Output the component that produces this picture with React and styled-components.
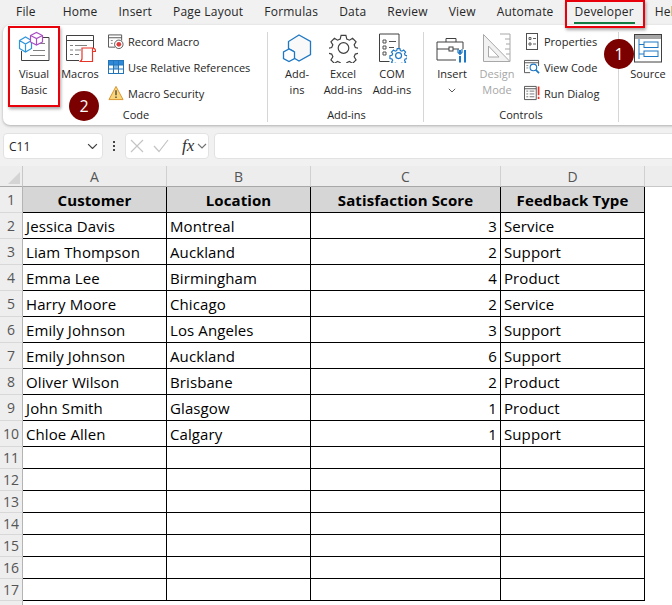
import React from "react";
import styled, { createGlobalStyle } from "styled-components";

const GlobalStyle = createGlobalStyle`
  html, body {
    margin: 0;
    padding: 0;
    background: #ffffff;
  }
`;

const uiFont = `"Open Sans", "Noto Sans", "Liberation Sans", sans-serif`;

const Page = styled.div`
  position: relative;
  width: 672px;
  height: 605px;
  overflow: hidden;
  background: #f1f1f1;
  font-family: ${uiFont};
  color: #262626;
`;

const TabBar = styled.div`
  display: flex;
  align-items: center;
  gap: 21px;
  height: 25px;
  padding-left: 16px;
  font-size: 12px;
  letter-spacing: 0.2px;
  white-space: nowrap;
`;

const Tab = styled.span`
  position: relative;
  padding-bottom: 2px;
  margin-right: ${({ $after }) => $after || 0}px;
  ${({ $active }) => $active && `
    &::after {
      content: "";
      position: absolute;
      left: -1px;
      right: -1px;
      bottom: -2px;
      height: 2px;
      background: #107c41;
    }
  `}
`;

const Ribbon = styled.div`
  display: flex;
  height: 100px;
  margin-left: 3px;
  width: 690px;
  background: #ffffff;
  border-radius: 7px;
  box-shadow: 0 1px 3px rgba(0, 0, 0, 0.28);
`;

const Group = styled.div`
  display: flex;
  flex-direction: column;
  flex: none;
  width: ${({ $width }) => $width}px;
  margin: 7px 0 3px;
  padding-left: ${({ $pad }) => $pad || 0}px;
  box-sizing: border-box;
  border-right: ${({ $last }) => ($last ? "none" : "1px solid #d6d6d6")};
`;

const GroupBody = styled.div`
  display: flex;
  flex: 1;
  min-height: 0;
`;

const GroupLabel = styled.div`
  font-size: 11px;
  line-height: 15px;
  height: 15px;
  text-align: center;
  padding-right: ${({ $shift }) => $shift || 0}px;
`;

const LargeButton = styled.div`
  display: flex;
  flex-direction: column;
  align-items: center;
  flex: none;
  width: ${({ $width }) => $width}px;
  font-size: 11px;
  line-height: 16px;
  text-align: center;
  white-space: nowrap;
  color: ${({ $disabled }) => ($disabled ? "#a6a6a6" : "#262626")};
`;

const IconSlot = styled.div`
  display: flex;
  align-items: flex-end;
  justify-content: center;
  height: 31px;
  margin-bottom: 3px;
`;

const ChevronLine = styled.div`
  display: flex;
  align-items: center;
  height: 16px;
`;

const SmallColumn = styled.div`
  display: flex;
  flex-direction: column;
  gap: 8px;
  margin-left: ${({ $left }) => $left || 0}px;
`;

const SmallButton = styled.div`
  display: flex;
  align-items: center;
  gap: 4px;
  height: 18px;
  font-size: 11px;
  white-space: nowrap;
  & > svg {
    flex: none;
    width: 16px;
  }
`;

const FormulaBar = styled.div`
  display: flex;
  align-items: center;
  height: 26px;
  margin-top: 8px;
  padding-left: 3px;
`;

const Field = styled.div`
  display: flex;
  align-items: center;
  box-sizing: border-box;
  height: 26px;
  flex: none;
  width: ${({ $width }) => $width}px;
  margin-left: ${({ $left }) => $left || 0}px;
  padding-right: ${({ $right }) => $right || 0}px;
  background: #ffffff;
  border: 1px solid #e2e2e2;
  border-radius: 4px;
`;

const NameText = styled.span`
  flex: 1;
  padding-left: 5px;
  font-size: 12px;
`;

const Dots = styled.div`
  display: flex;
  flex-direction: column;
  justify-content: center;
  gap: 2px;
  width: 22px;
  align-items: center;
  flex: none;
  & > i {
    display: block;
    width: 2px;
    height: 2px;
    background: #444;
  }
`;

const FormulaMarks = styled.svg`
  flex: none;
  margin-left: 4px;
`;

const FxText = styled.span`
  font-family: "Liberation Serif", serif;
  font-style: italic;
  font-size: 17px;
  font-weight: 400;
  color: #303030;
  margin-left: 8px;
  margin-right: 3px;
`;

const Sheet = styled.div`
  display: grid;
  grid-template-columns: 23px 144px 144px 190px 144px 27px;
  grid-template-rows: 21px 26px repeat(9, 26px) repeat(7, 22px) 5px;
  margin-top: 7px;
  background: #ffffff;
`;

const CornerCell = styled.div`
  position: relative;
  background: #ededed;
  border-right: 1px solid #c8c8c8;
  border-bottom: 1px solid #a8a8a8;
  box-sizing: border-box;
  &::after {
    content: "";
    position: absolute;
    right: 2px;
    bottom: 2px;
    border-style: solid;
    border-width: 0 0 12px 12px;
    border-color: transparent transparent #d4d4d4 transparent;
  }
`;

const ColumnHead = styled.div`
  display: flex;
  align-items: center;
  justify-content: center;
  box-sizing: border-box;
  background: #ededed;
  color: #555555;
  font-size: 14px;
  border-right: 1px solid #d0d0d0;
  border-bottom: 1px solid #a8a8a8;
`;

const SheetFill = styled.div`
  background: #ededed;
  border-bottom: 1px solid #c8c8c8;
  box-sizing: border-box;
`;

const RowHead = styled.div`
  display: flex;
  align-items: center;
  justify-content: center;
  box-sizing: border-box;
  background: #eeeeee;
  color: #555555;
  font-size: 14px;
  border-right: 1px solid #b4b4b4;
  border-bottom: 1px solid #d8d8d8;
`;

const Cell = styled.div`
  display: flex;
  align-items: center;
  box-sizing: border-box;
  padding: 0 3px;
  min-width: 0;
  font-size: 15px;
  letter-spacing: 0.1px;
  white-space: nowrap;
  color: #000000;
  border-right: 1px solid #000000;
  border-bottom: 1px solid #000000;
  justify-content: ${({ $align }) => $align || "flex-start"};
  ${({ $header }) => $header && `
    background: #d6d6d6;
    font-weight: 700;
    justify-content: center;
  `}
`;

const BlankCell = styled.div`
  background: #ffffff;
`;

const Callout = styled.div`
  position: absolute;
  left: ${({ $x }) => $x}px;
  top: ${({ $y }) => $y}px;
  width: ${({ $w }) => $w}px;
  height: ${({ $h }) => $h}px;
  box-sizing: border-box;
  border: 2px solid #e8000b;
  box-shadow: 1px 2px 3px rgba(0, 0, 0, 0.35);
`;

const Badge = styled.div`
  position: absolute;
  left: ${({ $x }) => $x}px;
  top: ${({ $y }) => $y}px;
  display: flex;
  align-items: center;
  justify-content: center;
  width: 30px;
  height: 30px;
  border-radius: 50%;
  background: #7b0000;
  color: #ffffff;
  font-size: 16px;
`;

const VisualBasicIcon = () => (
  <svg width="32" height="32" viewBox="0 0 32 32" fill="none">
    <path d="M24 6.500H31V29.500H3.500V20" stroke="#404040" />
    <path d="M15 12.500h12M15 19.500h12M12 24.500h15" stroke="#808080" />
    <path d="M1.500 9.500 7.500 6l6 3.500v8L7.500 21l-6-3.500zM1.500 9.500l6 3.500 6-3.500M7.500 13v8" stroke="#2d96dc" strokeWidth="1.200" fill="#fff" />
    <path d="M12.500 4.500 18.500 1.500l6 3v6.500L18.500 14l-6-3zM12.500 4.500l6 3 6-3M18.500 7.500V14" stroke="#a84fc4" strokeWidth="1.200" fill="#fff" />
  </svg>
);

const MacrosIcon = () => (
  <svg width="32" height="30" viewBox="0 0 32 30" fill="none">
    <path d="M2.500 2.500H29.500V16M2.500 2.500V27.500H15" stroke="#404040" />
    <path d="M2.500 7.500H29.500" stroke="#404040" />
    <path d="M6 12.500h3M11 12.500h12M6 17h3M11 17h6M6 21.500h3M11 21.500h4" stroke="#808080" />
    <path d="M18 15H28.500V28.500H15.500C17.500 28 18 27 18 25.500zM28.500 15c2 0 3 1 3 3.500H28.500" stroke="#e8352a" strokeWidth="1.200" fill="#fff" />
  </svg>
);

const RecordIcon = () => (
  <svg width="17" height="17" viewBox="0 0 17 17" fill="none">
    <path d="M.5 1.500h14v6M.5 1.500v13h7" stroke="#505050" />
    <path d="M.5 4.500h14" stroke="#505050" />
    <path d="M3 7.500h2M3 10.500h2" stroke="#808080" />
    <circle cx="11.500" cy="11.500" r="4.500" fill="#fff" stroke="#505050" />
    <circle cx="11.500" cy="11.500" r="2.500" fill="#e03a3a" />
  </svg>
);

const ReferencesIcon = () => (
  <svg width="16" height="14" viewBox="0 0 16 14" fill="none">
    <rect x=".5" y=".5" width="15" height="13" fill="#fff" stroke="#2474b8" />
    <rect x="1" y="1" width="14" height="4" fill="#2e8ad8" />
    <rect x="6" y="5" width="4" height="4" fill="#7ab8e8" />
    <path d="M5.500 .5v13M10.500 .5v13M.5 5h15M.5 9h15" stroke="#2474b8" />
  </svg>
);

const SecurityIcon = () => (
  <svg width="17" height="16" viewBox="0 0 17 16" fill="none">
    <path d="M8.500 1 16 15H1z" fill="#f9d67a" stroke="#d9902a" />
    <path d="M8.500 5v5.500M8.500 11.800v1.400" stroke="#404040" strokeWidth="1.400" />
  </svg>
);

const AddInsIcon = () => (
  <svg width="30" height="29" viewBox="0 0 30 29" fill="none">
    <path d="M17 1 28.500 7.500V20.500L17 27 11 23.500V17L6.500 14.500V7.500z" fill="#f9f9f9" stroke="#1f78c4" strokeWidth="1.300" />
    <path d="M7 15 12.500 18V24.500L7 27.500 1.500 24.500V18z" fill="#fff" stroke="#1f78c4" strokeWidth="1.300" />
  </svg>
);

const GearShape = ({ color, scale = 1, x = 0, y = 0, width = 1.200 }) => (
  <g transform={`translate(${x} ${y}) scale(${scale})`} stroke={color} strokeWidth={width / scale} fill="#fff">
    <path d="M11.500 1h5l.9 3.700 2.800 1.200 3.200-2 3.600 3.600-2 3.200 1.200 2.800 3.800.9v5l-3.800.9-1.200 2.800 2 3.200-3.600 3.600-3.200-2-2.800 1.200-.9 3.700h-5l-.9-3.700-2.800-1.200-3.200 2-3.600-3.600 2-3.200-1.200-2.800-3.800-.9v-5l3.800-.9 1.200-2.800-2-3.200 3.600-3.600 3.200 2 2.800-1.200z" />
    <circle cx="14" cy="14" r="5.500" />
  </g>
);

const GearIcon = () => (
  <svg width="29" height="29" viewBox="-1 0 30 29" fill="none">
    <GearShape color="#404040" />
  </svg>
);

const ComIcon = () => (
  <svg width="29" height="30" viewBox="0 0 29 30" fill="none">
    <path d="M1.500 1h19.500v14M1.500 1v27.500h10" stroke="#404040" />
    <path d="M5 7h3v3H5zM5 13h3v3H5zM5 19h3v3H5z" stroke="#505050" />
    <path d="M11 8.500h7M11 14.500h5" stroke="#505050" />
    <GearShape color="#1f78c4" scale={0.54} x={13} y={15} />
  </svg>
);

const ToolboxIcon = () => (
  <svg width="32" height="26" viewBox="0 0 32 26" fill="none">
    <path d="M10 5V1.500H20V5" stroke="#404040" />
    <path d="M1 5H27V12M1 5V23H20" stroke="#404040" />
    <path d="M1 12H13M17 12H23" stroke="#404040" />
    <rect x="13" y="10" width="4" height="4" stroke="#404040" />
    <path d="M24 13V16.500M24 19V25.500M29 13V25.500" stroke="#1f78c4" strokeWidth="2" />
    <path d="M22 12V15.500L24 17.500 26 15.500V12" stroke="#1f78c4" strokeWidth="1.200" />
  </svg>
);

const DesignIcon = () => (
  <svg width="28" height="30" viewBox="0 0 28 30" fill="none">
    <path d="M.5 1.500 27 28.500H.5z" fill="#f2f2f2" stroke="#a8a8a8" />
    <path d="M5.500 13 16 24H5.500z" fill="#fff" stroke="#a8a8a8" />
    <path d="M17 1H27V28" stroke="#a8a8a8" />
    <path d="M22 6h5M23 11h4M22 16h5M23 21h4" stroke="#a8a8a8" />
  </svg>
);

const PropertiesIcon = () => (
  <svg width="16" height="17" viewBox="0 0 16 17" fill="none">
    <rect x="2.500" y=".5" width="11" height="16" stroke="#505050" />
    <path d="M5 4.500h2v2H5zM5 10h2v2H5zM9 5.500h3M9 11h3" stroke="#606060" />
  </svg>
);

const ViewCodeIcon = () => (
  <svg width="17" height="16" viewBox="0 0 17 16" fill="none">
    <path d="M.5 1h15v6M.5 1v13h6M.5 3.500h15" stroke="#505050" />
    <path d="M2.500 6.500h2M2.500 9h2" stroke="#808080" />
    <circle cx="10" cy="8.500" r="3.500" fill="#fff" stroke="#1f78c4" strokeWidth="1.200" />
    <path d="M12.500 11 16 14.500" stroke="#1f78c4" strokeWidth="1.800" />
  </svg>
);

const RunDialogIcon = () => (
  <svg width="17" height="16" viewBox="0 0 17 16" fill="none">
    <path d="M.5 1h12.500M.5 1v14h12.500V1M.5 3.500h12.500" stroke="#505050" />
    <path d="M2.500 6h2M6 6h5M2.500 9h2M6 9h5M2.500 12h2M6 12h5" stroke="#707070" />
    <path d="M15.500 1v9.500M15.500 12v2.500" stroke="#e8352a" strokeWidth="1.800" />
  </svg>
);

const SourceIcon = () => (
  <svg width="28" height="29" viewBox="0 0 28 29" fill="none">
    <rect x=".5" y=".5" width="27" height="27.500" fill="#fff" stroke="#404040" />
    <rect x="1" y="1" width="26" height="4" fill="#a6a6a6" />
    <path d="M5 5V25M5 10.500H10M5 20H10" stroke="#1f78c4" />
    <rect x="10" y="8" width="14" height="5.500" stroke="#1f78c4" />
    <rect x="10" y="17" width="14" height="5.500" stroke="#1f78c4" />
  </svg>
);

const ChevronIcon = ({ color = "#404040", size = 10 }) => (
  <svg width={size} height={size * 0.6} viewBox="0 0 10 6" fill="none">
    <path d="M1 1l4 4 4-4" stroke={color} strokeWidth="1.100" />
  </svg>
);

const tabs = ["File", "Home", "Insert", "Page Layout", "Formulas", "Data", "Review", "View", "Automate", "Developer", "Help"];

const columns = ["A", "B", "C", "D"];
const headers = ["Customer", "Location", "Satisfaction Score", "Feedback Type"];
const rows = [
  ["Jessica Davis", "Montreal", 3, "Service"],
  ["Liam Thompson", "Auckland", 2, "Support"],
  ["Emma Lee", "Birmingham", 4, "Product"],
  ["Harry Moore", "Chicago", 2, "Service"],
  ["Emily Johnson", "Los Angeles", 3, "Support"],
  ["Emily Johnson", "Auckland", 6, "Support"],
  ["Oliver Wilson", "Brisbane", 2, "Product"],
  ["John Smith", "Glasgow", 1, "Product"],
  ["Chloe Allen", "Calgary", 1, "Support"],
];
const emptyRows = [11, 12, 13, 14, 15, 16, 17];

export default function App() {
  return (
    <Page>
      <GlobalStyle />
      <TabBar>
        {tabs.map((tab) => (
          <Tab key={tab} $active={tab === "Developer"} $after={tab === "File" ? 6 : 0}>{tab}</Tab>
        ))}
      </TabBar>

      <Ribbon>
        <Group $width={265} $pad={6}>
          <GroupBody>
            <LargeButton $width={50}>
              <IconSlot><VisualBasicIcon /></IconSlot>
              Visual<br />Basic
            </LargeButton>
            <LargeButton $width={42}>
              <IconSlot><MacrosIcon /></IconSlot>
              Macros
            </LargeButton>
            <SmallColumn $left={7}>
              <SmallButton><RecordIcon />Record Macro</SmallButton>
              <SmallButton><ReferencesIcon />Use Relative References</SmallButton>
              <SmallButton><SecurityIcon />Macro Security</SmallButton>
            </SmallColumn>
          </GroupBody>
          <GroupLabel $shift={4}>Code</GroupLabel>
        </Group>

        <Group $width={156} $pad={7}>
          <GroupBody>
            <LargeButton $width={44}>
              <IconSlot><AddInsIcon /></IconSlot>
              Add-<br />ins
            </LargeButton>
            <LargeButton $width={48}>
              <IconSlot><GearIcon /></IconSlot>
              Excel<br />Add-ins
            </LargeButton>
            <LargeButton $width={50}>
              <IconSlot><ComIcon /></IconSlot>
              COM<br />Add-ins
            </LargeButton>
          </GroupBody>
          <GroupLabel $shift={5}>Add-ins</GroupLabel>
        </Group>

        <Group $width={195} $pad={4}>
          <GroupBody>
            <LargeButton $width={48}>
              <IconSlot><ToolboxIcon /></IconSlot>
              Insert
              <ChevronLine><ChevronIcon size={8} /></ChevronLine>
            </LargeButton>
            <LargeButton $width={42} $disabled>
              <IconSlot><DesignIcon /></IconSlot>
              Design<br />Mode
            </LargeButton>
            <SmallColumn $left={6}>
              <SmallButton><PropertiesIcon />Properties</SmallButton>
              <SmallButton><ViewCodeIcon />View Code</SmallButton>
              <SmallButton><RunDialogIcon />Run Dialog</SmallButton>
            </SmallColumn>
          </GroupBody>
          <GroupLabel $shift={4}>Controls</GroupLabel>
        </Group>

        <Group $width={58} $last>
          <GroupBody>
            <LargeButton $width={58}>
              <IconSlot><SourceIcon /></IconSlot>
              Source
            </LargeButton>
          </GroupBody>
        </Group>
      </Ribbon>

      <FormulaBar>
        <Field $width={100} $right={4}>
          <NameText>C11</NameText>
          <ChevronIcon size={11} />
        </Field>
        <Dots><i /><i /><i /></Dots>
        <Field $width={84}>
          <FormulaMarks width="44" height="14" viewBox="0 0 44 14" fill="none">
            <path d="M1 1l12 12M13 1L1 13" stroke="#c4c4c4" strokeWidth="1.200" />
            <path d="M24 7l5 5.500 9-11.500" stroke="#c4c4c4" strokeWidth="1.200" />
          </FormulaMarks>
          <FxText>fx</FxText>
          <ChevronIcon size={10} color="#707070" />
        </Field>
        <Field $width={480} $left={5} />
      </FormulaBar>

      <Sheet>
        <CornerCell />
        {columns.map((col) => <ColumnHead key={col}>{col}</ColumnHead>)}
        <SheetFill />

        <RowHead>1</RowHead>
        {headers.map((text) => <Cell key={text} $header>{text}</Cell>)}
        <BlankCell />

        {rows.map((row, i) => (
          <React.Fragment key={i}>
            <RowHead>{i + 2}</RowHead>
            <Cell>{row[0]}</Cell>
            <Cell>{row[1]}</Cell>
            <Cell $align="flex-end">{row[2]}</Cell>
            <Cell>{row[3]}</Cell>
            <BlankCell />
          </React.Fragment>
        ))}

        {emptyRows.map((n) => (
          <React.Fragment key={n}>
            <RowHead>{n}</RowHead>
            <Cell /><Cell /><Cell /><Cell />
            <BlankCell />
          </React.Fragment>
        ))}

        <RowHead />
      </Sheet>

      <Callout $x={8} $y={26} $w={52} $h={81} />
      <Callout $x={565} $y={0} $w={80} $h={28} />
      <Badge $x={604} $y={39}>1</Badge>
      <Badge $x={69} $y={91}>2</Badge>
    </Page>
  );
}
